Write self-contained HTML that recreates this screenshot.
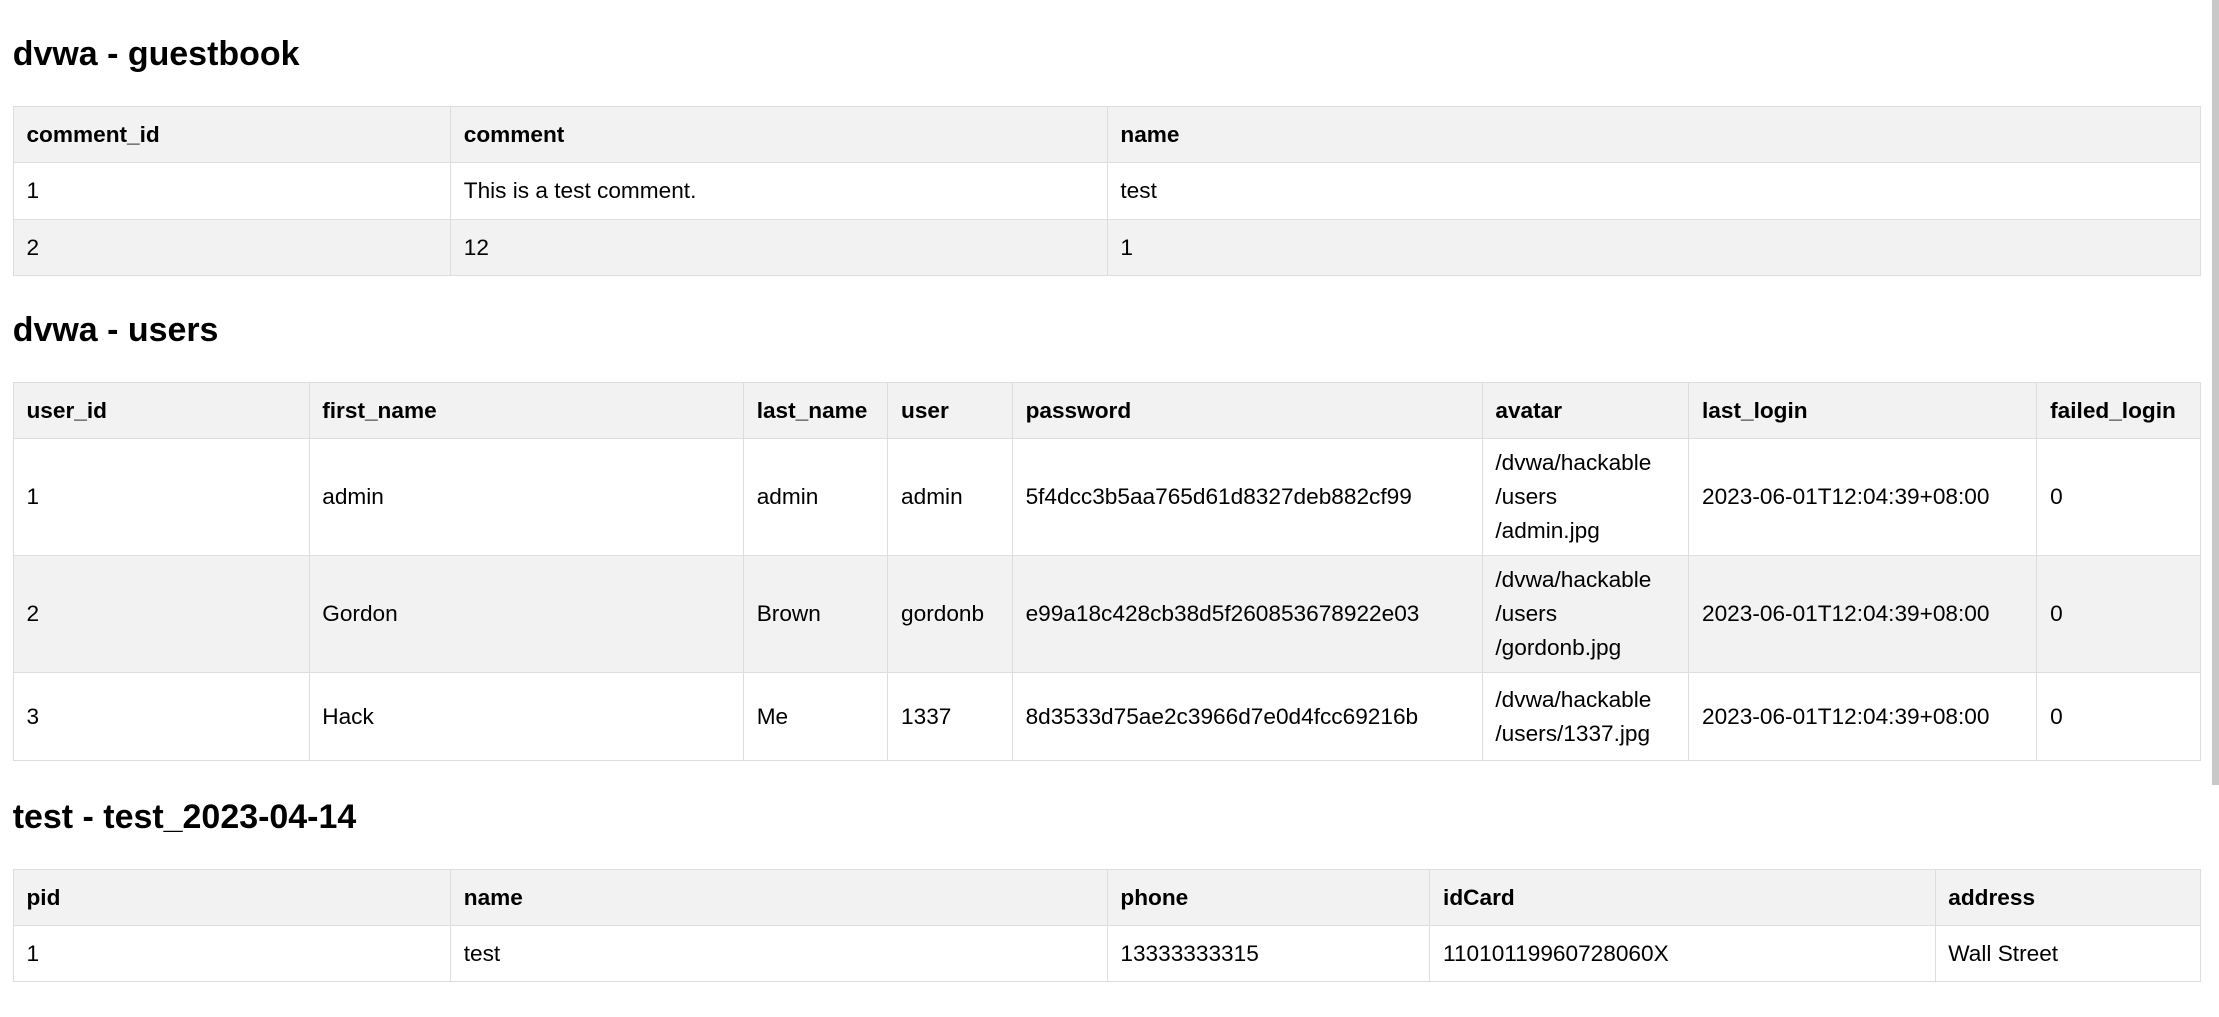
<!DOCTYPE html>
<html><head><meta charset="utf-8"><style>
html,body{margin:0;padding:0;background:#fff}
body{zoom:1.41518;width:1568px;height:718px;overflow:hidden;font-family:"Liberation Sans","Noto Sans CJK SC",sans-serif;color:#000;position:relative}
h2{font-size:24px;font-weight:bold;margin:0;position:absolute;left:9px;line-height:28px}
table{position:absolute;left:9px;width:1546px;border-collapse:collapse;table-layout:fixed;font-size:16px}
td,th{border:1px solid #ddd;padding:0 9px;text-align:left;vertical-align:middle;white-space:nowrap;line-height:22px;overflow:hidden}
th{background:#f2f2f2;font-weight:bold;height:39px}
tr.e td{background:#f2f2f2}
td{height:39px}
tr.t td{height:82px;line-height:24px}
tr.m td{height:61px;line-height:24px}
.sb{position:absolute;right:0;top:0;width:5px;height:555px;background:#c8c8c8}
</style></head><body>
<h2 style="top:25px">dvwa - guestbook</h2>
<table style="top:75px">
<colgroup><col style="width:309px"><col style="width:464px"><col></colgroup>
<tr><th>comment_id</th><th>comment</th><th>name</th></tr>
<tr><td>1</td><td>This is a test comment.</td><td>test</td></tr>
<tr class="e"><td>2</td><td>12</td><td>1</td></tr>
</table>
<h2 style="top:220px">dvwa - users</h2>
<table style="top:270px">
<colgroup><col style="width:209px"><col style="width:307px"><col style="width:102px"><col style="width:88px"><col style="width:332px"><col style="width:146px"><col style="width:246px"><col></colgroup>
<tr><th>user_id</th><th>first_name</th><th>last_name</th><th>user</th><th>password</th><th>avatar</th><th>last_login</th><th>failed_login</th></tr>
<tr class="t"><td>1</td><td>admin</td><td>admin</td><td>admin</td><td>5f4dcc3b5aa765d61d8327deb882cf99</td><td>/dvwa/hackable<br>/users<br>/admin.jpg</td><td>2023-06-01T12:04:39+08:00</td><td>0</td></tr>
<tr class="t e"><td>2</td><td>Gordon</td><td>Brown</td><td>gordonb</td><td>e99a18c428cb38d5f260853678922e03</td><td>/dvwa/hackable<br>/users<br>/gordonb.jpg</td><td>2023-06-01T12:04:39+08:00</td><td>0</td></tr>
<tr class="m"><td>3</td><td>Hack</td><td>Me</td><td>1337</td><td>8d3533d75ae2c3966d7e0d4fcc69216b</td><td>/dvwa/hackable<br>/users/1337.jpg</td><td>2023-06-01T12:04:39+08:00</td><td>0</td></tr>
</table>
<h2 style="top:564px">test - test_2023-04-14</h2>
<table style="top:614px">
<colgroup><col style="width:309px"><col style="width:464px"><col style="width:228px"><col style="width:357px"><col></colgroup>
<tr><th>pid</th><th>name</th><th>phone</th><th>idCard</th><th>address</th></tr>
<tr><td>1</td><td>test</td><td>13333333315</td><td>11010119960728060X</td><td>Wall Street</td></tr>
</table>
<div class="sb"></div>
</body></html>
